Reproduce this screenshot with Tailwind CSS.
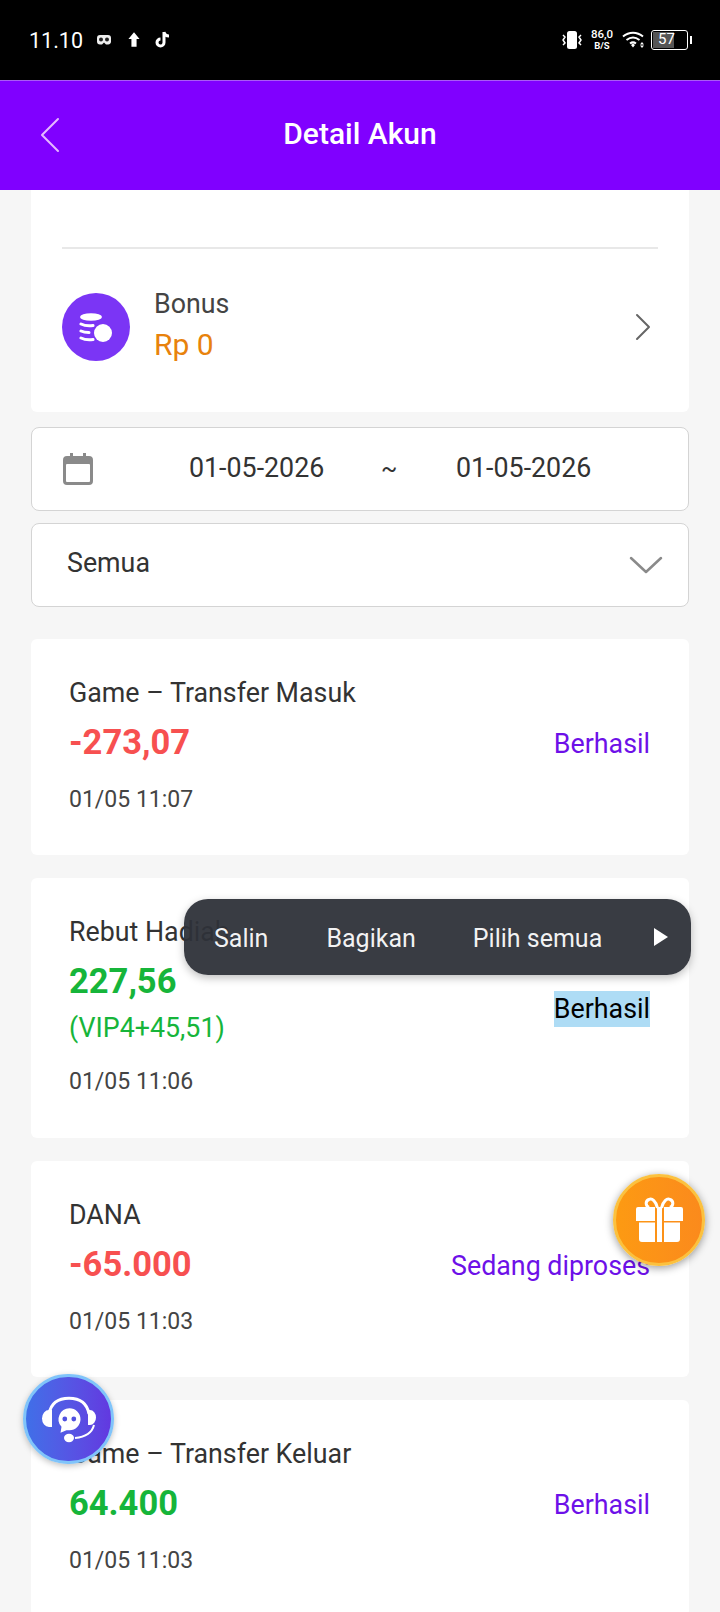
<!DOCTYPE html>
<html lang="en">
<head>
    <meta charset="UTF-8">
    <meta name="viewport" content="width=device-width, initial-scale=1.0">
    <title>Detail Akun</title>
    <script src="https://cdn.jsdelivr.net/npm/@tailwindcss/browser@4"></script>
</head>
<body class="bg-[#f6f6f6] font-['Roboto',sans-serif]">
<div class="relative w-[720px] h-[1612px] overflow-hidden">
    <!-- Status bar -->
    <div class="h-[80px] bg-black text-white flex items-center justify-between pl-[29px] pr-[28px] pb-[1px]">
        <div class="flex items-center">
            <span class="text-[21.500px] w-[53px] whitespace-nowrap mt-[3px]">11.10</span>
            <svg class="ml-[15px]" width="14" height="10" viewBox="0 0 14 10"><path fill="#eee" d="M3 0h8a3 3 0 0 1 3 3v3a3 3 0 0 1-3 3.500H9L7 7.500 5 9.500H3a3 3 0 0 1-3-3V3a3 3 0 0 1 3-3z"/><circle cx="4" cy="4.500" r="2" fill="#222"/><circle cx="10" cy="4.500" r="2" fill="#222"/></svg>
            <svg class="ml-[17px]" width="12" height="17" viewBox="0 0 14 17"><path fill="#fff" d="M7 0l6.500 8H10v9H4V8H.5z"/></svg>
            <svg class="ml-[15px] -mt-[2px]" width="16" height="18" viewBox="0 0 16 18"><path fill="none" stroke="#fff" stroke-width="3" d="M9 2v10.500a3.500 3.500 0 1 1-3.500-3.500M9 2c.5 2.500 2.500 4 5 4"/></svg>
        </div>
        <div class="flex items-center">
            <svg width="22" height="20" viewBox="0 0 22 20"><rect x="6" y="1" width="10" height="18" rx="2.500" fill="#fff"/><path fill="none" stroke="#fff" stroke-width="1.500" d="M2 5l2 2-2 3 2 3-2 2M20 5l-2 2 2 3-2 3 2 2"/></svg>
            <div class="ml-[7px] w-[24px] flex flex-col items-center text-white font-medium leading-[11px] text-[11.500px] whitespace-nowrap"><span>86,0</span><span class="text-[9.500px] font-bold">B/S</span></div>
            <svg class="ml-[8px]" width="24" height="18" viewBox="0 0 24 18"><path fill="none" stroke="#fff" stroke-width="2" d="M1 5.500c6-5 14-5 20 0M4.500 9c4-3 9-3 13 0M8 12.500c2-1.500 4-1.500 6 0"/><path fill="#fff" d="M9 14l2-1.500 2 1.500-2 2.500zM20 11l2 2.500h-4zM20 17l2-2.500h-4z"/></svg>
            <div class="ml-[5px] w-[37px] h-[20px] border-[1.500px] border-white rounded-[3px] p-[1px]">
                <div class="w-[21px] h-full bg-[#555] relative"><span class="absolute left-[5px] top-0 text-[15px] leading-[15px] text-white">57</span></div>
            </div>
            <div class="ml-[2px] w-[2px] h-[8px] bg-white"></div>
        </div>
    </div>

    <!-- Header -->
    <header class="relative h-[110px] bg-[#8000ff] border-t border-[#a95cf5] flex items-center justify-center">
        <svg class="absolute left-[40px] top-[36px]" width="20" height="36" viewBox="0 0 20 36"><path fill="none" stroke="#e6b8ff" stroke-width="2" stroke-linecap="round" stroke-linejoin="round" d="M18 2L2 18l16 16"/></svg>
        <h1 class="text-white text-[30px] font-medium -mt-[5px]">Detail Akun</h1>
    </header>

    <main class="px-[31px]">
        <!-- Bonus card -->
        <section class="h-[222px] bg-white rounded-b-[6px] px-[31px]">
            <div class="h-[59px] border-b-2 border-[#e8e8e8]"></div>
            <div class="flex items-center pt-[38px]">
                <div class="w-[68px] h-[68px] rounded-full bg-[#7b35f5] flex items-center justify-center">
                    <svg width="34" height="34" viewBox="0 0 34 34"><ellipse cx="12" cy="7" rx="11" ry="3.800" fill="#fff"/><path fill="none" stroke="#fff" stroke-width="3" stroke-linecap="round" d="M2 14c3 1.500 8 2 12 1.500M2 21c2 1 5 1.500 8 1.500M2 28c3 1.500 8 2 12 1.500"/><circle cx="24" cy="23" r="9" fill="#fff"/></svg>
                </div>
                <div class="ml-[24px] flex-1 -mt-[1px]">
                    <div class="text-[26.800px] leading-[36px] text-[#444]">Bonus</div>
                    <div class="mt-[1px] text-[30px] leading-[44px] text-[#e8820c]">Rp 0</div>
                </div>
                <svg class="mr-[7px]" width="16" height="28" viewBox="0 0 16 28"><path fill="none" stroke="#666" stroke-width="2" stroke-linecap="round" stroke-linejoin="round" d="M2 2l12 12L2 26"/></svg>
            </div>
        </section>

        <!-- Date range -->
        <div class="mt-[15px] h-[84px] bg-white border border-[#d4d4d4] rounded-[8px] flex items-center pl-[30px] text-[#333] text-[26.800px] whitespace-nowrap">
            <svg width="32" height="32" viewBox="0 0 32 32"><path fill="#8a8a8a" d="M8 0h3v3h10V0h3v3h3a4 4 0 0 1 4 4v21a4 4 0 0 1-4 4H5a4 4 0 0 1-4-4V7a4 4 0 0 1 4-4h3z"/><rect x="4" y="11" width="24" height="18" rx="1" fill="#fff"/></svg>
            <span class="ml-[95px] w-[136px] -mt-[1px]">01-05-2026</span>
            <span class="ml-[56px] w-[17px] text-[24px]">~</span>
            <span class="ml-[58px] w-[136px] -mt-[1px]">01-05-2026</span>
        </div>

        <!-- Filter select -->
        <div class="mt-[12px] h-[84px] bg-white border border-[#d4d4d4] rounded-[8px] flex items-center justify-between pl-[35px] pr-[25px] text-[#333] text-[26.800px]">
            <span class="-mt-[4px]">Semua</span>
            <svg width="34" height="18" viewBox="0 0 34 18"><path fill="none" stroke="#8a8a8a" stroke-width="2.500" stroke-linecap="round" stroke-linejoin="round" d="M2 2l15 14L32 2"/></svg>
        </div>

        <!-- Transactions -->
        <div class="mt-[32px] flex flex-col gap-[23px]">
            <article class="relative h-[216px] bg-white rounded-[6px] pl-[38px] pt-[36px]">
                <div class="text-[26.800px] leading-[36px] text-[#333]">Game – Transfer Masuk</div>
                <div class="mt-[6px] text-[34.500px] leading-[50px] font-bold text-[#f75050]">-273,07</div>
                <div class="mt-[18px] text-[23px] leading-[30px] text-[#444]">01/05 11:07</div>
                <span class="absolute right-[39px] top-[87px] text-[26.800px] leading-[36px] text-[#6d10e8]">Berhasil</span>
            </article>
            <article class="relative h-[260px] bg-white rounded-[6px] pl-[38px] pt-[36px]">
                <div class="text-[26.800px] leading-[36px] text-[#333]">Rebut Hadiah</div>
                <div class="mt-[6px] text-[34.500px] leading-[50px] font-bold text-[#16b53a]">227,56</div>
                <div class="mt-[4px] text-[26.800px] leading-[36px] text-[#16b53a]">(VIP4+45,51)</div>
                <div class="mt-[21px] text-[23px] leading-[30px] text-[#444]">01/05 11:06</div>
                <span class="absolute right-[39px] top-[113px] text-[26.800px] leading-[36px] text-black bg-[#aedcf5]">Berhasil</span>
            </article>
            <article class="relative h-[216px] bg-white rounded-[6px] pl-[38px] pt-[36px]">
                <div class="text-[26.800px] leading-[36px] text-[#333]">DANA</div>
                <div class="mt-[6px] text-[34.500px] leading-[50px] font-bold text-[#f75050]">-65.000</div>
                <div class="mt-[18px] text-[23px] leading-[30px] text-[#444]">01/05 11:03</div>
                <span class="absolute right-[39px] top-[87px] text-[26.800px] leading-[36px] text-[#6d10e8]">Sedang diproses</span>
            </article>
            <article class="relative h-[216px] bg-white rounded-[6px] pl-[38px] pt-[36px]">
                <div class="text-[26.800px] leading-[36px] text-[#333]">Game – Transfer Keluar</div>
                <div class="mt-[6px] text-[34.500px] leading-[50px] font-bold text-[#16b53a]">64.400</div>
                <div class="mt-[18px] text-[23px] leading-[30px] text-[#444]">01/05 11:03</div>
                <span class="absolute right-[39px] top-[87px] text-[26.800px] leading-[36px] text-[#6d10e8]">Berhasil</span>
            </article>
        </div>
    </main>

    <!-- Text selection toolbar -->
    <div class="absolute left-[184px] top-[899px] w-[507px] h-[76px] rounded-[24px] bg-[#2e3139]/95 shadow-[0_3px_8px_rgba(0,0,0,0.25)] flex items-center text-white/95 text-[25px] whitespace-nowrap">
        <span class="ml-[30px] mt-[3px]">Salin</span>
        <span class="ml-[58px] mt-[3px]">Bagikan</span>
        <span class="ml-[57px] mt-[3px]">Pilih semua</span>
        <svg class="ml-[52px]" width="14" height="18" viewBox="0 0 14 18"><path fill="#fff" d="M0 0l14 9-14 9z"/></svg>
    </div>

    <!-- Floating gift button -->
    <div class="absolute left-[613px] top-[1174px] w-[92px] h-[92px] rounded-full border-[3px] border-[#fbc13f] bg-gradient-to-r from-[#fd9a12] to-[#fb8a1c] shadow-[0_2px_8px_rgba(0,0,0,0.4)] flex items-center justify-center">
        <svg width="47" height="46" viewBox="0 0 47 46"><path fill="none" stroke="#fff" stroke-width="3" d="M21.500 11C20 4 16 1 13 2.500 9 4 9.500 9 13 10.500M25.500 11C27 4 31 1 34 2.500 38 4 37.500 9 34 10.500"/><path fill="#fff" d="M2 10h17v14H0V12a2 2 0 0 1 2-2zM28 10h17a2 2 0 0 1 2 2v12H28zM3 25.500h16V45H6a3 3 0 0 1-3-3zM28 25.500h16V42a3 3 0 0 1-3 3H28zM21 10h5v35h-5z"/></svg>
    </div>

    <!-- Floating support button -->
    <div class="absolute left-[23px] top-[1374px] w-[91px] h-[90px] rounded-full border-[3px] border-[#80c4fa] bg-gradient-to-r from-[#3f6fe8] to-[#6238e0] shadow-[0_2px_6px_rgba(0,0,0,0.25)] flex items-center justify-center">
        <svg width="60" height="54" viewBox="0 0 60 54"><path fill="none" stroke="#fff" stroke-width="3" d="M10 22C12 11 20 6.300 30 6.300S48 11 50 22"/><path fill="#fff" d="M13 18v17h-3a7 8.500 0 0 1-7-8.500A7 8.500 0 0 1 10 18zM49 18h2a6 7.500 0 0 1 6 7.500 6 7.500 0 0 1-6 7.500h-2z"/><path fill="#fff" d="M30.500 16.300a11 11 0 0 1 0 22h-3l-6 2.500 1-6a11 11 0 0 1 8-18.500z"/><circle cx="25.800" cy="27" r="2.400" fill="#5050e0"/><circle cx="34.800" cy="27" r="2.400" fill="#5050e0"/><path fill="none" stroke="#fff" stroke-width="2" d="M55 33c-2 8-9 12-19 13"/><ellipse cx="30" cy="46" rx="5" ry="4.200" fill="#fff"/></svg>
    </div>
</div>
</body>
</html>
